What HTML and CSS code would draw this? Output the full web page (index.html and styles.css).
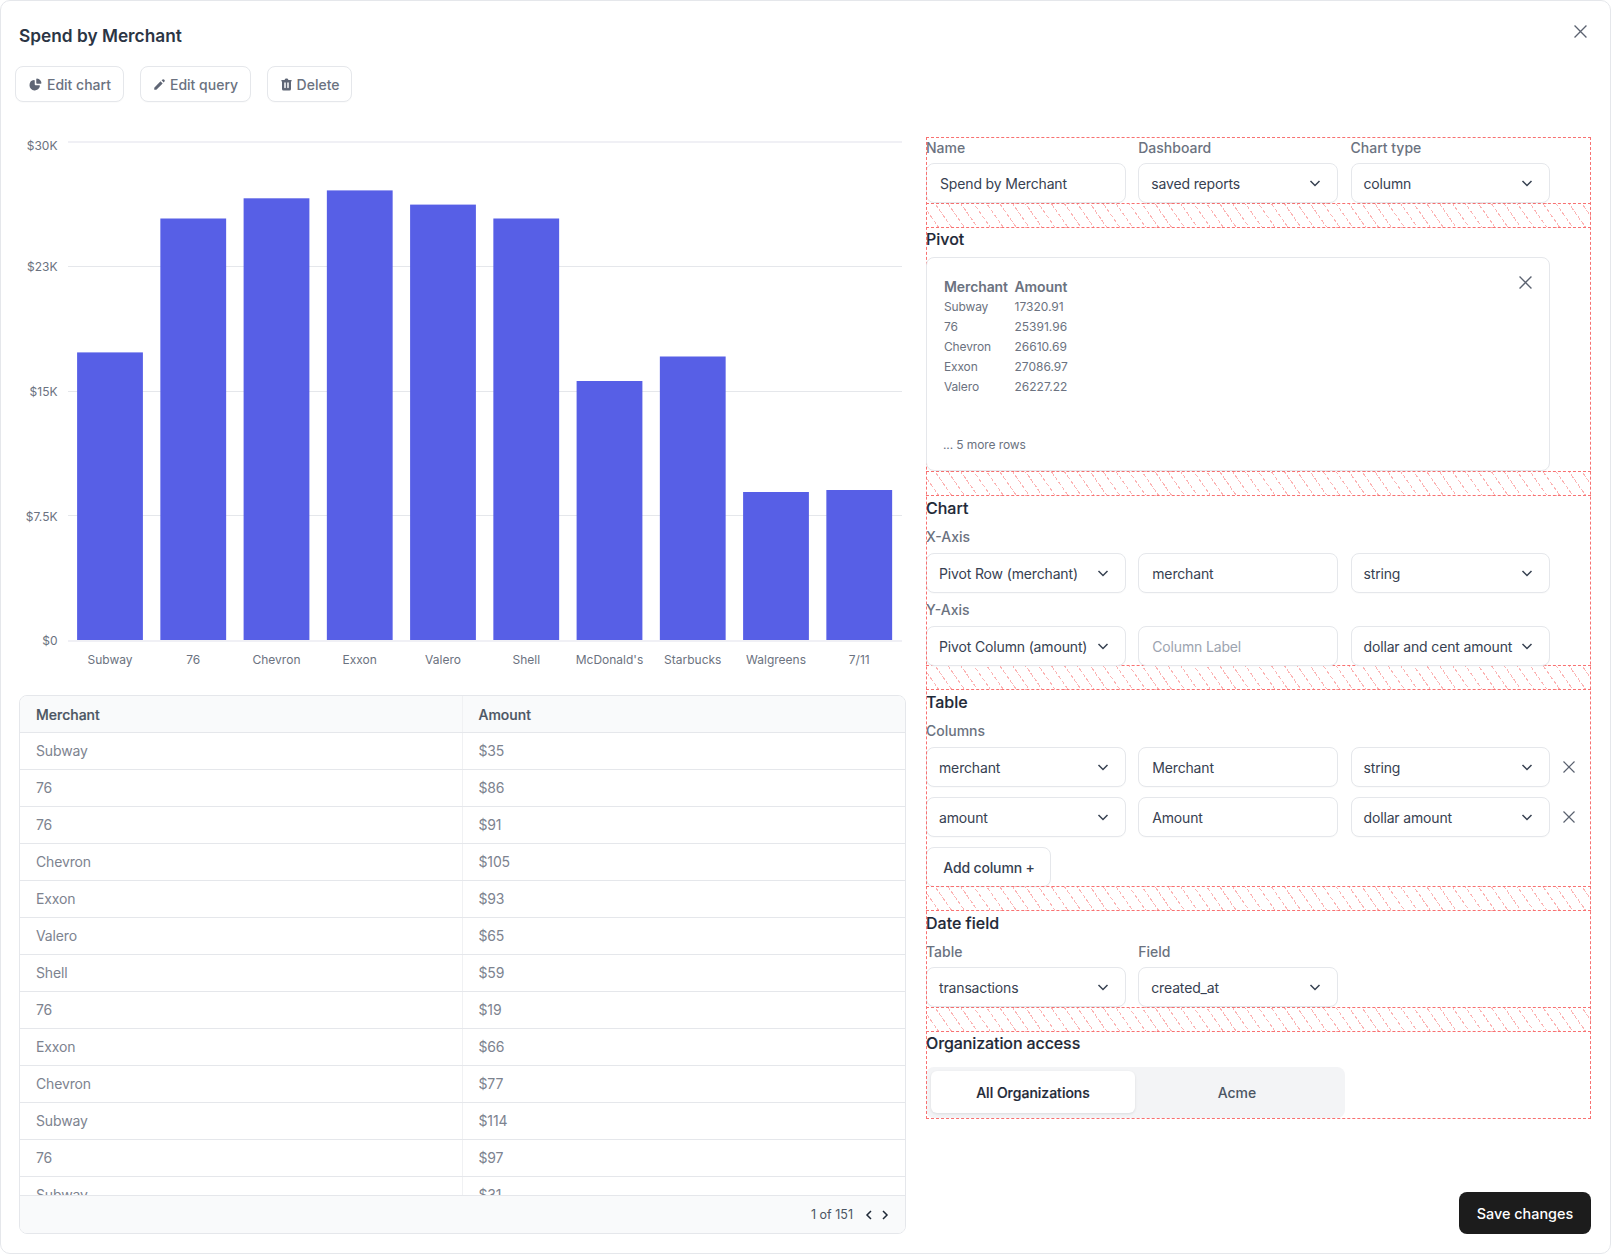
FILE: index.html
```html
<!DOCTYPE html>
<html lang="en">
<head>
<meta charset="utf-8">
<title>Spend by Merchant</title>
<link rel="stylesheet" href="styles.css">
</head>
<body>
<div class="panel">
  <button class="close-top" aria-label="Close"><svg class="x-icon" viewBox="0 0 12 12"><path d="M.5.5l11 11M11.500.5l-11 11"/></svg></button>
  <h1 class="title">Spend by Merchant</h1>
  <div class="actions">
    <button class="btn btn-chart"><svg class="btn-icon" viewBox="0 0 20 20"><path d="M12 9a1 1 0 01-1-1V3c0-.552.45-1.007.997-.93a7.004 7.004 0 015.933 5.933c.078.547-.378.997-.93.997h-5z"/><path d="M8.003 4.07C8.55 3.994 9 4.449 9 5v5a1 1 0 001 1h5c.552 0 1.008.45.93.997A7.001 7.001 0 012 11a7.002 7.002 0 016.003-6.93z"/></svg>Edit chart</button>
    <button class="btn"><svg class="btn-icon" viewBox="0 0 20 20"><path d="M13.586 3.586a2 2 0 112.828 2.828l-.793.793-2.828-2.828.793-.793zM11.379 5.793L3 14.172V17h2.828l8.38-8.379-2.83-2.828z"/></svg>Edit query</button>
    <button class="btn"><svg class="btn-icon" viewBox="0 0 20 20"><path fill-rule="evenodd" clip-rule="evenodd" d="M9 2a1 1 0 00-.894.553L7.382 4H4a1 1 0 000 2v10a2 2 0 002 2h8a2 2 0 002-2V6a1 1 0 100-2h-3.382l-.724-1.447A1 1 0 0011 2H9zM7 8a1 1 0 012 0v6a1 1 0 11-2 0V8zm5-1a1 1 0 00-1 1v6a1 1 0 102 0V8a1 1 0 00-1-1z"/></svg>Delete</button>
  </div>

  <div class="body">
    <div class="left">
      <svg class="chart" viewBox="19 137 887 545">
        <line class="grid-edge" x1="68" x2="902" y1="142" y2="142"/>
        <line class="grid" x1="68" x2="902" y1="266.500" y2="266.500"/>
        <line class="grid" x1="68" x2="902" y1="391.500" y2="391.500"/>
        <line class="grid" x1="68" x2="902" y1="515.500" y2="515.500"/>
        <line class="grid-edge" x1="68" x2="902" y1="641" y2="641"/>
        <text class="tick" x="57.500" y="150">$30K</text>
        <text class="tick" x="57.500" y="271">$23K</text>
        <text class="tick" x="57.500" y="396">$15K</text>
        <text class="tick" x="57.500" y="521">$7.5K</text>
        <text class="tick" x="57.500" y="645">$0</text>
        <rect class="bar" x="77.100" y="352.400" width="65.800" height="287.600"/>
        <rect class="bar" x="160.350" y="218.500" width="65.800" height="421.500"/>
        <rect class="bar" x="243.600" y="198.300" width="65.800" height="441.700"/>
        <rect class="bar" x="326.850" y="190.400" width="65.800" height="449.600"/>
        <rect class="bar" x="410.100" y="204.600" width="65.800" height="435.400"/>
        <rect class="bar" x="493.350" y="218.500" width="65.800" height="421.500"/>
        <rect class="bar" x="576.600" y="381" width="65.800" height="259"/>
        <rect class="bar" x="659.850" y="356.500" width="65.800" height="283.500"/>
        <rect class="bar" x="743.100" y="492" width="65.800" height="148"/>
        <rect class="bar" x="826.350" y="490" width="65.800" height="150"/>
        <text class="cat" x="110" y="664">Subway</text>
        <text class="cat" x="193.250" y="664">76</text>
        <text class="cat" x="276.500" y="664">Chevron</text>
        <text class="cat" x="359.750" y="664">Exxon</text>
        <text class="cat" x="443" y="664">Valero</text>
        <text class="cat" x="526.250" y="664">Shell</text>
        <text class="cat" x="609.500" y="664">McDonald's</text>
        <text class="cat" x="692.750" y="664">Starbucks</text>
        <text class="cat" x="776" y="664">Walgreens</text>
        <text class="cat" x="859.250" y="664">7/11</text>
      </svg>

      <div class="table-card">
        <div class="table-scroll">
          <table class="data">
            <thead><tr><th>Merchant</th><th>Amount</th></tr></thead>
            <tbody>
              <tr><td>Subway</td><td>$35</td></tr>
              <tr><td>76</td><td>$86</td></tr>
              <tr><td>76</td><td>$91</td></tr>
              <tr><td>Chevron</td><td>$105</td></tr>
              <tr><td>Exxon</td><td>$93</td></tr>
              <tr><td>Valero</td><td>$65</td></tr>
              <tr><td>Shell</td><td>$59</td></tr>
              <tr><td>76</td><td>$19</td></tr>
              <tr><td>Exxon</td><td>$66</td></tr>
              <tr><td>Chevron</td><td>$77</td></tr>
              <tr><td>Subway</td><td>$114</td></tr>
              <tr><td>76</td><td>$97</td></tr>
              <tr><td>Subway</td><td>$31</td></tr>
            </tbody>
          </table>
        </div>
        <div class="table-foot">
          <span>1 of 151</span>
          <svg class="pager" viewBox="0 0 8 10"><path d="M6 1L2 5l4 4"/></svg>
          <svg class="pager" viewBox="0 0 8 10"><path d="M2 1l4 4-4 4"/></svg>
        </div>
      </div>
    </div>

    <div class="right">
      <div class="form">
        <div class="cols top-cols">
          <div><div class="label">Name</div><div class="field">Spend by Merchant</div></div>
          <div><div class="label">Dashboard</div><div class="field select">saved reports<svg class="chev" viewBox="0 0 16 16"><path d="M3.500 6l4.500 4.500L12.500 6"/></svg></div></div>
          <div><div class="label">Chart type</div><div class="field select">column<svg class="chev" viewBox="0 0 16 16"><path d="M3.500 6l4.500 4.500L12.500 6"/></svg></div></div>
        </div>
        <div class="hatch"></div>

        <h2 class="heading">Pivot</h2>
        <div class="pivot">
          <svg class="x-icon pivot-close" viewBox="0 0 12 12"><path d="M.5.5l11 11M11.500.5l-11 11"/></svg>
          <div class="pivot-grid">
            <span class="pivot-head">Merchant</span><span class="pivot-head">Amount</span>
            <span>Subway</span><span class="num">17320.91</span>
            <span>76</span><span class="num">25391.96</span>
            <span>Chevron</span><span class="num">26610.69</span>
            <span>Exxon</span><span class="num">27086.97</span>
            <span>Valero</span><span class="num">26227.22</span>
          </div>
          <div class="pivot-more">... 5 more rows</div>
        </div>
        <div class="hatch"></div>

        <h2 class="heading lowered">Chart</h2>
        <div class="label sub">X-Axis</div>
        <div class="cols">
          <div class="field select">Pivot Row (merchant)<svg class="chev" viewBox="0 0 16 16"><path d="M3.500 6l4.500 4.500L12.500 6"/></svg></div>
          <div class="field">merchant</div>
          <div class="field select">string<svg class="chev" viewBox="0 0 16 16"><path d="M3.500 6l4.500 4.500L12.500 6"/></svg></div>
        </div>
        <div class="label sub">Y-Axis</div>
        <div class="cols">
          <div class="field select">Pivot Column (amount)<svg class="chev" viewBox="0 0 16 16"><path d="M3.500 6l4.500 4.500L12.500 6"/></svg></div>
          <div class="field placeholder">Column Label</div>
          <div class="field select">dollar and cent amount<svg class="chev" viewBox="0 0 16 16"><path d="M3.500 6l4.500 4.500L12.500 6"/></svg></div>
        </div>
        <div class="hatch overlap"></div>

        <h2 class="heading lowered">Table</h2>
        <div class="label sub">Columns</div>
        <div class="cols with-remove">
          <div class="field select">merchant<svg class="chev" viewBox="0 0 16 16"><path d="M3.500 6l4.500 4.500L12.500 6"/></svg></div>
          <div class="field">Merchant</div>
          <div class="field select">string<svg class="chev" viewBox="0 0 16 16"><path d="M3.500 6l4.500 4.500L12.500 6"/></svg></div>
          <svg class="x-icon" viewBox="0 0 12 12"><path d="M.5.5l11 11M11.500.5l-11 11"/></svg>
        </div>
        <div class="cols with-remove next">
          <div class="field select">amount<svg class="chev" viewBox="0 0 16 16"><path d="M3.500 6l4.500 4.500L12.500 6"/></svg></div>
          <div class="field">Amount</div>
          <div class="field select">dollar amount<svg class="chev" viewBox="0 0 16 16"><path d="M3.500 6l4.500 4.500L12.500 6"/></svg></div>
          <svg class="x-icon" viewBox="0 0 12 12"><path d="M.5.5l11 11M11.500.5l-11 11"/></svg>
        </div>
        <button class="add-col">Add column +</button>
        <div class="hatch overlap"></div>

        <h2 class="heading lowered">Date field</h2>
        <div class="cols date-cols">
          <div><div class="label">Table</div><div class="field select">transactions<svg class="chev" viewBox="0 0 16 16"><path d="M3.500 6l4.500 4.500L12.500 6"/></svg></div></div>
          <div><div class="label">Field</div><div class="field select">created_at<svg class="chev" viewBox="0 0 16 16"><path d="M3.500 6l4.500 4.500L12.500 6"/></svg></div></div>
        </div>
        <div class="hatch"></div>

        <h2 class="heading tight">Organization access</h2>
        <div class="segment">
          <div class="seg-item active">All Organizations</div>
          <div class="seg-item">Acme</div>
        </div>
      </div>
      <button class="save">Save changes</button>
    </div>
  </div>
</div>
</body>
</html>
```
FILE: styles.css
```css
* { box-sizing: border-box; }
html, body { margin: 0; padding: 0; }
body { font-family: Inter, "Liberation Sans", sans-serif; color: #374151; background: #fff; }
button { font-family: inherit; }

.panel {
  position: relative;
  width: 1611px;
  height: 1254px;
  border: 1px solid #e5e7eb;
  border-radius: 10px;
  background: #fff;
  overflow: hidden;
}
.close-top {
  position: absolute;
  top: 24px;
  right: 23px;
  width: 13px;
  height: 13px;
  padding: 0;
  border: 0;
  background: none;
  display: flex;
}
.x-icon { width: 12px; height: 12px; fill: none; stroke: #5b6270; stroke-width: 1.2; }
.close-top .x-icon { width: 13px; height: 13px; }

.title {
  margin: 24px 0 0 18px;
  font-size: 17.300px;
  line-height: 22px;
  font-weight: 600;
  color: #2b3544;
}
.actions { display: flex; gap: 16px; margin: 19px 0 0 14px; }
.btn {
  display: flex;
  align-items: center;
  gap: 3px;
  height: 36px;
  padding: 0 11.500px 0 11px;
  border: 1px solid #e5e7eb;
  border-radius: 8px;
  background: #fff;
  color: #6b7280;
  font-size: 14px;
  font-weight: 500;
  box-shadow: 0 1px 1px rgba(0,0,0,.02);
}
.btn-chart { gap: 4px; padding-left: 12px; padding-right: 12px; }
.btn-icon { width: 15px; height: 15px; fill: #5f6675; }

.body { display: flex; gap: 20px; height: 1097px; margin: 35px 0 0 18px; }
.left { display: flex; flex-direction: column; width: 887px; }
.chart { display: block; width: 887px; height: 545px; flex: none; margin-bottom: 13px; }
.grid { stroke: #e5e7eb; stroke-width: 1; }
.grid-edge { stroke: #f0f0f5; stroke-width: 2; }
.bar { fill: #575fe6; }
.tick, .cat { font-size: 12px; fill: #6b7280; font-family: Inter, sans-serif; }
.tick { text-anchor: end; }
.cat { text-anchor: middle; }

.table-card {
  display: flex;
  flex-direction: column;
  flex: 1;
  min-height: 0;
  border: 1px solid #e5e7eb;
  border-radius: 8px;
  overflow: hidden;
}
.table-scroll { flex: 1; min-height: 0; overflow: hidden; }
.data { width: 100%; border-collapse: collapse; table-layout: fixed; font-size: 14px; }
.data th, .data td { padding: 0 16px; text-align: left; border-bottom: 1px solid #e5e7eb; }
.data th:first-child, .data td:first-child { width: 442px; border-right: 1px solid #f0f1f3; }
.data th { height: 36px; padding-top: 2px; background: #f9fafb; color: #4b5563; font-weight: 500; -webkit-text-stroke: .2px #4b5563; }
.data td { height: 37px; color: #7d838f; letter-spacing: -.15px; }
.table-foot {
  flex: none;
  display: flex;
  align-items: center;
  justify-content: flex-end;
  gap: 8px;
  height: 38px;
  padding-right: 16px;
  border-top: 1px solid #e5e7eb;
  background: #f9fafb;
  color: #4b5563;
  font-size: 12.500px;
}
.table-foot span { margin-right: 4px; }
.pager { width: 8px; height: 10px; fill: none; stroke: #1f2937; stroke-width: 1.5; }

.right { display: flex; flex-direction: column; width: 665px; }
.form { padding-bottom: 1px; outline: 1px dashed #f87171; outline-offset: -1px; }
.cols { display: grid; grid-template-columns: repeat(3, 199.750px); column-gap: 12.5px; }
.with-remove { grid-template-columns: repeat(3, 199.750px) 12px; align-items: center; }
.next { margin-top: 10px; }
.date-cols { margin-top: 7px; }
.date-cols .label { margin-bottom: 5px; }
.top-cols { padding-top: 1px; }
.top-cols .label { margin-bottom: 5px; }
.label { font-size: 14px; line-height: 20px; font-weight: 500; color: #6b7280; margin-bottom: 6px; }
.sub { margin-top: 7px; }
.heading { margin: 0; font-size: 16px; line-height: 24px; font-weight: 500; color: #1f2937; -webkit-text-stroke: .15px #1f2937; }
.lowered { margin-top: 1px; }
.tight { letter-spacing: -.1px; }
.field {
  display: flex;
  align-items: center;
  height: 40px;
  padding: 0 13px;
  border: 1px solid #e5e7eb;
  border-radius: 8px;
  background: #fff;
  font-size: 14px;
  color: #374151;
  white-space: nowrap;
  letter-spacing: -.15px;
  box-shadow: 0 1px 1px rgba(0,0,0,.02);
}
.select { justify-content: space-between; padding: 0 14px 0 12px; }
.placeholder { color: #9ca3af; }
.chev { width: 16px; height: 16px; flex: none; fill: none; stroke: #374151; stroke-width: 1.5; }

.hatch {
  height: 25px;
  margin-bottom: -1px;
  border-top: 1px dashed #f87171;
  border-bottom: 1px dashed #f87171;
  background-image:
    repeating-linear-gradient(145deg, transparent 0 4px, #fff 4px 6px),
    repeating-linear-gradient(55deg, transparent 0 9.600px, #fcb4b4 9.600px 10.600px);
}
.overlap { margin-top: -1px; }

.pivot {
  position: relative;
  display: flex;
  flex-direction: column;
  justify-content: space-between;
  width: 624px;
  height: 214px;
  margin-top: 6px;
  padding: 18px 17px 17px;
  border: 1px solid #e5e7eb;
  border-radius: 8px;
  box-shadow: 0 1px 1px rgba(0,0,0,.02);
}
.pivot-close { position: absolute; top: 18px; right: 17px; width: 13px; height: 13px; }
.pivot-grid { display: grid; grid-template-columns: 70.500px auto; font-size: 12px; line-height: 20px; color: #6b7280; letter-spacing: -.15px; }
.pivot-head { font-size: 14px; line-height: 21px; font-weight: 600; color: #6b7280; letter-spacing: -.1px; }
.num { letter-spacing: 0; }
.pivot-more { font-size: 12px; line-height: 16px; color: #6b7280; letter-spacing: -.1px; margin-left: -1px; }

.add-col {
  display: block;
  width: 125px;
  height: 40px;
  margin-top: 10px;
  padding: 0 0 0 1px;
  border: 1px solid #e5e7eb;
  border-radius: 8px;
  background: #fff;
  font-size: 14px;
  font-weight: 500;
  color: #374151;
  letter-spacing: -.15px;
  box-shadow: 0 1px 1px rgba(0,0,0,.02);
}

.segment {
  display: grid;
  grid-template-columns: 204px 204px;
  width: 418.500px;
  height: 51px;
  margin-top: 12px;
  padding: 4px 5px 5px;
  border-radius: 8px;
  background: #f3f4f6;
}
.seg-item {
  display: flex;
  align-items: center;
  justify-content: center;
  border-radius: 6px;
  font-size: 14px;
  font-weight: 500;
  color: #4b5563;
}
.seg-item.active { background: #fff; color: #1f2937; box-shadow: 0 1px 3px rgba(0,0,0,.1); -webkit-text-stroke: .2px #1f2937; }

.save {
  align-self: flex-end;
  width: 132px;
  height: 42px;
  margin-top: auto;
  padding: 0;
  border: 0;
  border-radius: 8px;
  background: #1c1c1c;
  color: #fff;
  font-size: 14.400px;
  font-weight: 500;
}
```
